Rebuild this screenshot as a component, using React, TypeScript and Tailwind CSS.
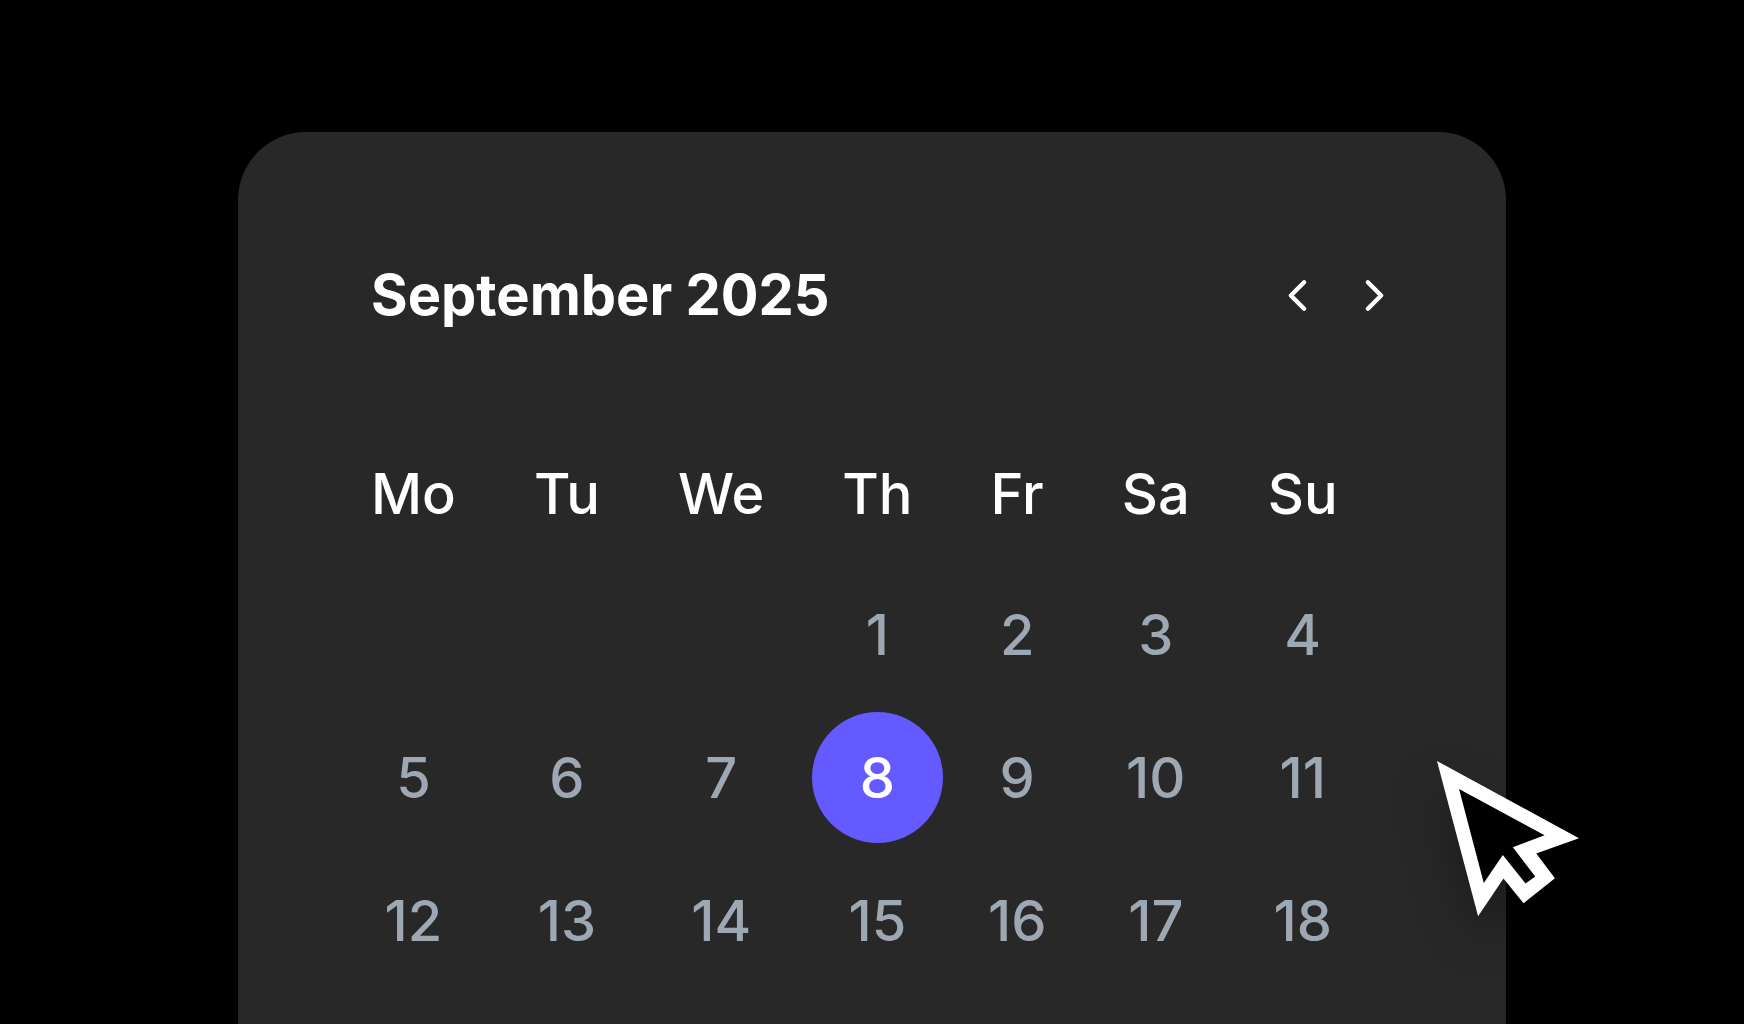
import { ChevronLeft, ChevronRight } from "lucide-react";

const weekdays = ["Mo", "Tu", "We", "Th", "Fr", "Sa", "Su"];

const weeks = [
  [null, null, null, 1, 2, 3, 4],
  [5, 6, 7, 8, 9, 10, 11],
  [12, 13, 14, 15, 16, 17, 18],
];

const selectedDay = 8;

function Cursor() {
  return (
    <svg
      viewBox="112 91 425 465"
      aria-hidden="true"
      className="pointer-events-none absolute top-[629px] -right-[73px] w-[142px] overflow-visible drop-shadow-[0_24px_24px_rgba(0,0,0,0.3)]"
    >
      <path
        fill="#fff"
        d="M112 91 L537 322 L409 368 L465 442 L371 517 L311 443 L235 556 Z"
      />
      <path
        fill="#000"
        d="M178 175 L434 313 L339 349 L406 437 L377 458 L309 372 L252 456 Z"
      />
    </svg>
  );
}

function Day({ day }: { day: number | null }) {
  if (day === null) return null;

  if (day === selectedDay) {
    return (
      <button
        aria-pressed="true"
        className="mx-auto flex size-[131px] items-center justify-center rounded-full bg-[#645aff] text-white"
      >
        {day}
      </button>
    );
  }

  return <button className="mx-auto block text-[#9da8b3]">{day}</button>;
}

export default function App() {
  return (
    <div className="h-screen overflow-hidden bg-black px-6 pt-[132px] font-['Inter',sans-serif]">
      <div className="relative mx-auto h-full max-w-[1268px] rounded-t-[68px] bg-[#282828] pt-[127px]">
        <div className="flex items-center justify-between pr-[105px] pl-[133px]">
          <h1 className="text-[56px] leading-[72px] font-bold text-white">September 2025</h1>
          <div className="flex gap-6">
            <button aria-label="Previous month" className="text-white">
              <ChevronLeft size={53} strokeWidth={2} />
            </button>
            <button aria-label="Next month" className="text-white">
              <ChevronRight size={53} strokeWidth={2} />
            </button>
          </div>
        </div>

        <table className="mt-[94px] ml-[94px] text-center text-[56px] leading-[72px] font-medium">
          <thead>
            <tr>
              {weekdays.map((name) => (
                <th key={name} scope="col" className="h-[138px] px-[39px] py-0 text-center font-medium text-white">
                  {name}
                </th>
              ))}
            </tr>
          </thead>
          <tbody>
            {weeks.map((week, i) => (
              <tr key={i}>
                {week.map((day, j) => (
                  <td key={j} className="h-[143px] p-0">
                    <Day day={day} />
                  </td>
                ))}
              </tr>
            ))}
          </tbody>
        </table>

        <Cursor />
      </div>
    </div>
  );
}
